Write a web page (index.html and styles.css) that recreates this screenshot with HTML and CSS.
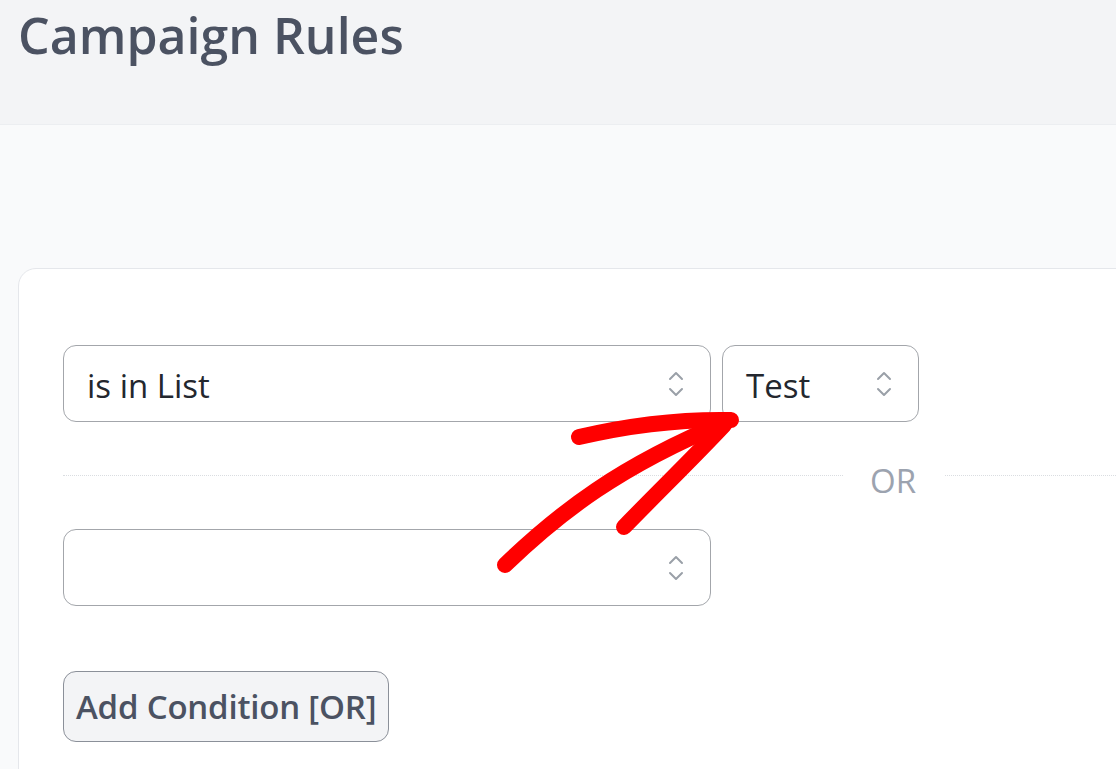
FILE: index.html
```html
<!DOCTYPE html>
<html>
<head>
<meta charset="utf-8">
<link rel="stylesheet" href="styles.css">
</head>
<body>
<header class="top">
  <h1 class="title">Campaign Rules</h1>
</header>
<main class="content">
  <section class="card">
    <div class="row">
      <div class="select wide"><span class="val">is in List</span><svg class="chev" viewBox="0 0 16 28" width="16" height="28"><path d="M2 9 L8 3 L14 9 M2 19 L8 25 L14 19" fill="none" stroke="#9aa0a8" stroke-width="2" stroke-linecap="round" stroke-linejoin="round"/></svg></div>
      <div class="select small"><span class="val">Test</span><svg class="chev" viewBox="0 0 16 28" width="16" height="28"><path d="M2 9 L8 3 L14 9 M2 19 L8 25 L14 19" fill="none" stroke="#9aa0a8" stroke-width="2" stroke-linecap="round" stroke-linejoin="round"/></svg></div>
    </div>
    <div class="divider"><span class="line"></span><span class="or">OR</span><span class="line"></span></div>
    <div class="row">
      <div class="select wide"><span class="val"></span><svg class="chev" viewBox="0 0 16 28" width="16" height="28"><path d="M2 9 L8 3 L14 9 M2 19 L8 25 L14 19" fill="none" stroke="#9aa0a8" stroke-width="2" stroke-linecap="round" stroke-linejoin="round"/></svg></div>
    </div>
    <button class="add">Add Condition [OR]</button>
  </section>
</main>
<svg class="arrow" width="1116" height="769" viewBox="0 0 1116 769">
  <g fill="none" stroke="#ff0000" stroke-linecap="round" stroke-linejoin="round" stroke-width="16">
    <path d="M505 565 C 560 512, 620 466, 726 422"/>
    <path d="M579 437 C 630 425, 680 419, 731 420"/>
    <path d="M624 527 C 660 490, 695 456, 724 425"/>
  </g>
</svg>
</body>
</html>
```
FILE: styles.css
```css
html, body {
  margin: 0;
  padding: 0;
}
body {
  width: 1116px;
  height: 769px;
  overflow: hidden;
  background: #f9fafb;
  font-family: "Open Sans", "Noto Sans", sans-serif;
  position: relative;
}
.top {
  height: 125px;
  background: #f3f4f6;
  border-bottom: 1px solid #eceef1;
  box-sizing: border-box;
  padding: 5px 0 0 18px;
}
.title {
  margin: 0;
  font-size: 50px;
  font-weight: 600;
  color: #4b5262;
  line-height: 60px;
}
.content {
  padding: 143px 0 0 18px;
}
.card {
  width: 1140px;
  height: 520px;
  background: #ffffff;
  border: 1px solid #e5e7eb;
  border-radius: 18px;
  box-sizing: border-box;
  padding: 76px 0 0 44px;
}
.row {
  display: flex;
  gap: 11px;
}
.select {
  height: 77px;
  box-sizing: border-box;
  border: 1.5px solid #a3a6ab;
  border-radius: 13px;
  display: flex;
  align-items: center;
  justify-content: space-between;
  padding: 0 26px 0 23px;
  background: #fff;
}
.select.wide { width: 648px; }
.select.small { width: 197px; }
.val {
  font-size: 33px;
  color: #23272e;
  padding-top: 3px;
}
.chev { display: block; }
.divider {
  display: flex;
  align-items: center;
  height: 107px;
  width: 1053px;
}
.line {
  flex: 1;
  border-top: 1.5px dotted #dadde1;
}
.divider .line:first-child { flex: 0 0 780px; }
.or {
  font-size: 33px;
  color: #9ca3af;
  padding: 9px 29px 0 27px;
}
.add {
  margin-top: 65px;
  height: 71px;
  padding: 0 12px;
  background: #f3f4f6;
  border: 1.5px solid #8b9099;
  border-radius: 13px;
  font-family: "Open Sans", "Noto Sans", sans-serif;
  font-size: 33px;
  font-weight: 600;
  color: #4b5262;
  letter-spacing: -0.2px;
}
.arrow {
  position: absolute;
  left: 0;
  top: 0;
  pointer-events: none;
}
```
